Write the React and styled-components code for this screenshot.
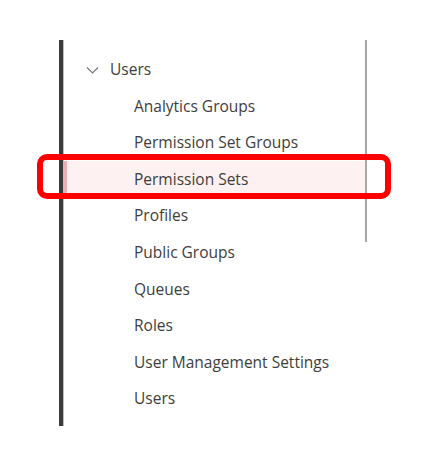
import styled, { createGlobalStyle } from "styled-components";

const GlobalStyle = createGlobalStyle`
  html, body {
    margin: 0;
    padding: 0;
    background: #ffffff;
  }
  body {
    font-family: "Open Sans", "Noto Sans", sans-serif;
  }
`;

const items = [
  "Analytics Groups",
  "Permission Set Groups",
  "Permission Sets",
  "Profiles",
  "Public Groups",
  "Queues",
  "Roles",
  "User Management Settings",
  "Users",
];

const Page = styled.div`
  position: relative;
  width: 427px;
  height: 466px;
  padding: 40px 0 0 59px;
  box-sizing: border-box;
`;

const Panel = styled.div`
  display: flex;
  width: 308px;
  height: 386px;
  border-left: 4px solid #3b3b3b;
  box-shadow: inset 1px 0 0 #bdbdbd;
  box-sizing: border-box;
`;

const List = styled.ul`
  flex: 1;
  list-style: none;
  margin: 0;
  padding: 11px 0 0 0;
`;

const Row = styled.li`
  display: flex;
  align-items: center;
  height: 36.55px;
  padding-left: ${(p) => (p.$child ? "67px" : "19px")};
  font-size: 15.5px;
  color: #3e3e3c;
  background: ${(p) => (p.$active ? "#fdf1f1" : "transparent")};
  border-left: 4px solid ${(p) => (p.$active ? "#eab0b6" : "transparent")};
  box-sizing: border-box;
  white-space: nowrap;
`;

const Chevron = styled.svg`
  width: 13px;
  height: 13px;
  margin-right: 11px;
  margin-top: 1px;
`;

const Track = styled.div`
  width: 2px;
  display: flex;
  flex-direction: column;
`;

const Thumb = styled.div`
  height: 202px;
  background: #a7a7a7;
`;

const Callout = styled.div`
  position: absolute;
  left: 37px;
  top: 154px;
  width: 354px;
  height: 45px;
  border: 6.5px solid #fe0000;
  border-radius: 10px;
  box-sizing: border-box;
`;

export default function App() {
  return (
    <Page>
      <GlobalStyle />
      <Panel>
        <List>
          <Row>
            <Chevron viewBox="0 0 13 13" fill="none">
              <path d="M1 4.5 L6.5 10 L12 4.5" stroke="#7a7876" strokeWidth="1.2" />
            </Chevron>
            Users
          </Row>
          {items.map((name) => (
            <Row key={name} $child $active={name === "Permission Sets"}>
              {name}
            </Row>
          ))}
        </List>
        <Track>
          <Thumb />
        </Track>
      </Panel>
      <Callout />
    </Page>
  );
}
